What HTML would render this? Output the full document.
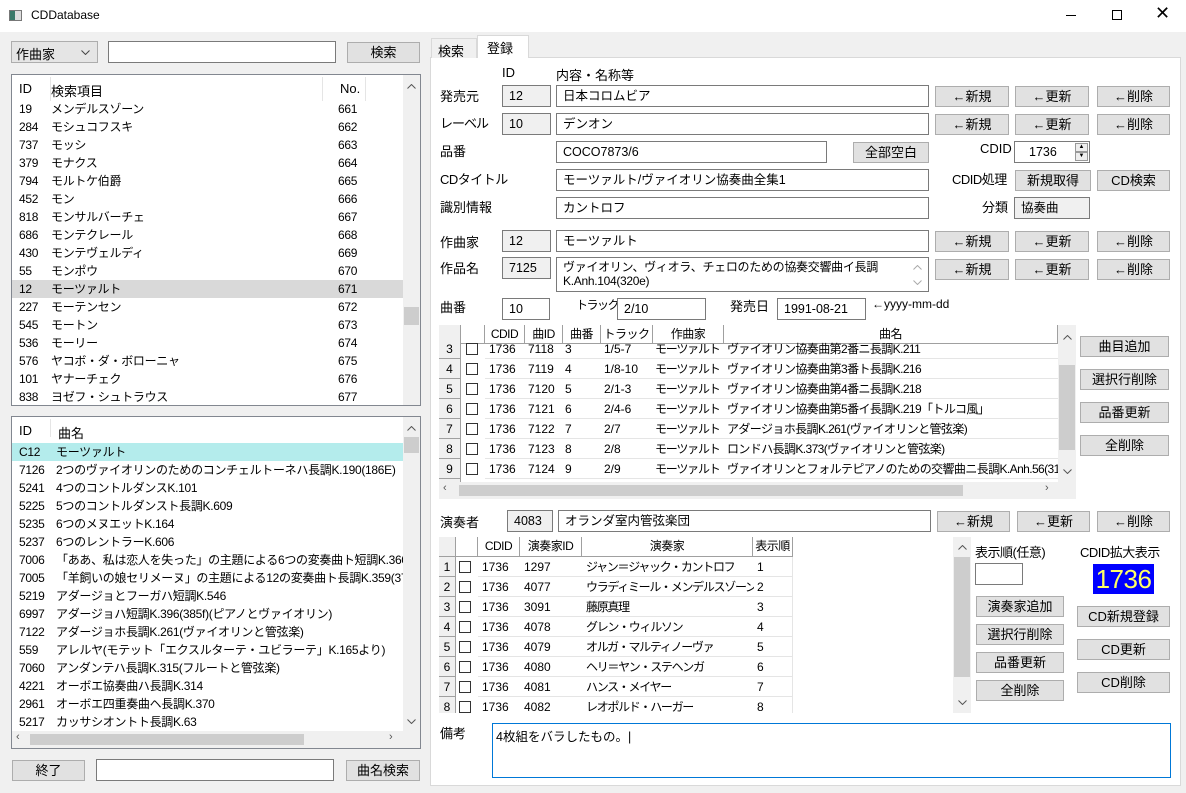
<!DOCTYPE html>
<html><head><meta charset="utf-8"><style>
*{box-sizing:border-box;margin:0;padding:0}
body{width:1186px;height:793px;background:#f0f0f0;font:12px "Liberation Sans","Noto Sans CJK JP",sans-serif;color:#000;position:relative;overflow:hidden}
.a{position:absolute;white-space:nowrap}
.b{position:absolute;background:#e1e1e1;border:1px solid #adadad;text-align:center;font-size:13px;white-space:nowrap}
.t{position:absolute;background:#fff;border:1px solid #7a7a7a;padding-left:6px;font-size:12.5px;white-space:nowrap;overflow:hidden}
.r{position:absolute;background:#f0f0f0;border:1px solid #7a7a7a;padding-left:6px;font-size:12.5px;white-space:nowrap}
.l{position:absolute;font-size:13px;white-space:nowrap}
.box{position:absolute;background:#fff;border:1px solid #828790;overflow:hidden}
.row{position:absolute;left:0;height:18px;line-height:18px;white-space:nowrap;letter-spacing:-0.3px}
.vs{position:absolute;background:#f0f0f0}
.th{position:absolute;height:18px;line-height:18px;text-align:center;border-right:1px solid #a0a0a0;border-bottom:1px solid #a0a0a0;background:#fff;overflow:hidden;letter-spacing:-0.5px}
.gr{position:absolute;height:20px;line-height:20px;border-bottom:1px solid #e5e5e5;white-space:nowrap;font-size:12px}
.rn{position:absolute;background:#f0f0f0;border-right:1px solid #a0a0a0;border-bottom:1px solid #a0a0a0;text-align:center}
.cb{position:absolute;width:12px;height:12px;border:1px solid #333;background:#fff}
</style></head><body>
<div class="a" style="left:0;top:0;width:1186px;height:32px;background:#fff"></div>
<div class="a" style="left:9px;top:10px;width:13px;height:11px;border:1px solid #777;background:#ddd"><div style="width:5px;height:9px;background:#3b7a6a"></div></div>
<div class="a" style="left:31px;top:8px;font-size:12px">CDDatabase</div>
<div class="a" style="left:1066px;top:15px;width:10px;height:1px;background:#000"></div>
<div class="a" style="left:1112px;top:10px;width:10px;height:10px;border:1px solid #000"></div>
<div class="a" style="left:1155px;top:3px;font-size:18px">✕</div>

<div class="a" style="left:11px;top:41px;width:87px;height:22px;background:#e5e5e5;border:1px solid #adadad;padding:2px 4px;font-size:13px">作曲家<svg style="position:absolute;right:7px;top:8px" width="9" height="5"><path d="M0.5 0.5L4.5 4.5L8.5 0.5" fill="none" stroke="#444"/></svg></div>
<div class="t" style="left:108px;top:41px;width:228px;height:22px"></div>
<div class="b" style="left:347px;top:42px;width:73px;height:21px;line-height:19px">検索</div>

<div class="box" style="left:11px;top:74px;width:410px;height:332px">
 <div class="a" style="left:38px;top:2px;width:1px;height:24px;background:#e5e5e5"></div>
 <div class="a" style="left:310px;top:2px;width:1px;height:24px;background:#e5e5e5"></div>
 <div class="a" style="left:353px;top:2px;width:1px;height:24px;background:#e5e5e5"></div>
 <div class="a" style="left:7px;top:6px;font-size:13px">ID</div><div class="a" style="left:39px;top:6px;font-size:13px">検索項目</div><div class="a" style="left:328px;top:6px;font-size:13px">No.</div>
 <div id="l1"></div>
 <div class="vs" style="left:391px;top:0;width:17px;height:330px"></div>
 <svg class="a" style="left:395px;top:9px" width="9" height="5"><path d="M0.5 4.5L4.5 0.5L8.5 4.5" fill="none" stroke="#555"/></svg>
 <div class="a" style="left:392px;top:232px;width:15px;height:18px;background:#cdcdcd"></div>
</div>

<div class="box" style="left:11px;top:416px;width:410px;height:333px">
 <div class="a" style="left:38px;top:2px;width:1px;height:18px;background:#e5e5e5"></div>
 <div class="a" style="left:7px;top:6px;font-size:13px">ID</div><div class="a" style="left:46px;top:6px;font-size:13px">曲名</div>
 <div id="l2"></div>
 <div class="vs" style="left:391px;top:0;width:17px;height:314px"></div>
 <svg class="a" style="left:395px;top:9px" width="9" height="5"><path d="M0.5 4.5L4.5 0.5L8.5 4.5" fill="none" stroke="#555"/></svg>
 <div class="a" style="left:392px;top:20px;width:15px;height:16px;background:#cdcdcd"></div>
 <svg class="a" style="left:395px;top:302px" width="9" height="5"><path d="M0.5 0.5L4.5 4.5L8.5 0.5" fill="none" stroke="#555"/></svg>
 <div class="vs" style="left:0;top:314px;width:408px;height:17px"></div>
 <div class="a" style="left:18px;top:317px;width:274px;height:11px;background:#cdcdcd"></div>
 <div class="a" style="left:4px;top:314px;font-size:11px;color:#555">‹</div>
 <div class="a" style="left:377px;top:314px;font-size:11px;color:#555">›</div>
</div>

<div class="b" style="left:12px;top:760px;width:73px;height:21px;line-height:19px">終了</div>
<div class="t" style="left:96px;top:759px;width:238px;height:22px"></div>
<div class="b" style="left:346px;top:760px;width:74px;height:21px;line-height:19px">曲名検索</div>

<div class="a" style="left:430px;top:57px;width:751px;height:729px;background:#fff;border:1px solid #d9d9d9"></div>
<div class="a" style="left:431px;top:38px;width:46px;height:20px;border:1px solid #d9d9d9;border-bottom:none;background:#f0f0f0;padding:2px 6px;font-size:13px">検索</div>
<div class="a" style="left:477px;top:35px;width:52px;height:23px;border:1px solid #d9d9d9;border-bottom:none;background:#fff;padding:2px 9px;font-size:13px">登録</div>

<div class="l" style="left:502px;top:65px">ID</div><div class="l" style="left:556px;top:65px">内容・名称等</div>
<div class="l" style="left:440px;top:86px">発売元</div><div class="r" style="left:502px;top:85px;width:49px;height:22px;line-height:20px">12</div><div class="t" style="left:556px;top:85px;width:373px;height:22px;line-height:20px">日本コロムビア</div>
<div class="l" style="left:440px;top:113px;letter-spacing:-1px">レーベル</div><div class="r" style="left:502px;top:113px;width:49px;height:22px;line-height:20px">10</div><div class="t" style="left:556px;top:113px;width:373px;height:22px;line-height:20px">デンオン</div>
<div class="l" style="left:440px;top:141px">品番</div><div class="t" style="left:556px;top:141px;width:271px;height:22px;line-height:20px">COCO7873/6</div>
<div class="b" style="left:853px;top:142px;width:76px;height:21px;line-height:19px">全部空白</div>
<div class="l" style="left:980px;top:141px">CDID</div>
<div class="t" style="left:1014px;top:141px;width:76px;height:22px;line-height:20px;padding-left:14px">1736</div>
<div class="a" style="left:1075px;top:143px;width:13px;height:9px;border:1px solid #999;background:#eee;font-size:6px;text-align:center;line-height:7px">▲</div>
<div class="a" style="left:1075px;top:152px;width:13px;height:9px;border:1px solid #999;background:#eee;font-size:6px;text-align:center;line-height:7px">▼</div>
<div class="l" style="left:440px;top:169px;letter-spacing:-0.5px">CDタイトル</div><div class="t" style="left:556px;top:169px;width:373px;height:22px;line-height:20px">モーツァルト/ヴァイオリン協奏曲全集1</div>
<div class="l" style="left:952px;top:169px;letter-spacing:-0.5px">CDID処理</div>
<div class="b" style="left:1015px;top:170px;width:76px;height:21px;line-height:19px">新規取得</div>
<div class="b" style="left:1097px;top:170px;width:73px;height:21px;line-height:19px">CD検索</div>
<div class="l" style="left:440px;top:197px">識別情報</div><div class="t" style="left:556px;top:197px;width:373px;height:22px;line-height:20px">カントロフ</div>
<div class="l" style="left:982px;top:197px">分類</div><div class="r" style="left:1014px;top:197px;width:76px;height:22px;line-height:20px">協奏曲</div>

<div class="l" style="left:440px;top:232px">作曲家</div><div class="r" style="left:502px;top:230px;width:49px;height:22px;line-height:20px">12</div><div class="t" style="left:556px;top:230px;width:373px;height:22px;line-height:20px">モーツァルト</div>
<div class="l" style="left:440px;top:258px">作品名</div><div class="r" style="left:502px;top:257px;width:49px;height:22px;line-height:20px">7125</div>
<div class="t" style="left:556px;top:257px;width:373px;height:35px;line-height:14px;padding-top:2px;font-size:12px;letter-spacing:-0.3px">ヴァイオリン、ヴィオラ、チェロのための協奏交響曲イ長調<br>K.Anh.104(320e)<svg style="position:absolute;right:6px;top:7px" width="9" height="5"><path d="M0.5 4.5L4.5 0.5L8.5 4.5" fill="none" stroke="#aaa"/></svg><svg style="position:absolute;right:6px;top:22px" width="9" height="5"><path d="M0.5 0.5L4.5 4.5L8.5 0.5" fill="none" stroke="#aaa"/></svg></div>
<div class="l" style="left:440px;top:297px">曲番</div><div class="t" style="left:502px;top:298px;width:48px;height:22px;line-height:20px">10</div>
<div class="l" style="left:576px;top:296px;font-size:12px;letter-spacing:-1.5px">トラック</div><div class="t" style="left:617px;top:298px;width:89px;height:22px;line-height:20px">2/10</div>
<div class="l" style="left:730px;top:296px">発売日</div><div class="t" style="left:777px;top:298px;width:89px;height:22px;line-height:20px">1991-08-21</div>
<div class="l" style="left:872px;top:297px;font-size:12px">←yyyy-mm-dd</div>

<div id="btns"></div>

<div class="a" style="left:439px;top:325px;width:637px;height:174px;background:#fff;overflow:hidden">
 <div class="rn" style="left:0;top:0;width:22px;height:19px"></div>
 <div id="g1h"></div>
 <div id="g1"></div>
 <div class="vs" style="left:619px;top:0;width:18px;height:157px"></div>
 <svg class="a" style="left:624px;top:10px" width="9" height="5"><path d="M0.5 4.5L4.5 0.5L8.5 4.5" fill="none" stroke="#555"/></svg>
 <div class="a" style="left:620px;top:40px;width:16px;height:85px;background:#cdcdcd"></div>
 <svg class="a" style="left:624px;top:144px" width="9" height="5"><path d="M0.5 0.5L4.5 4.5L8.5 0.5" fill="none" stroke="#555"/></svg>
 <div class="vs" style="left:0;top:157px;width:637px;height:17px"></div>
 <div class="a" style="left:20px;top:160px;width:504px;height:11px;background:#cdcdcd"></div>
 <div class="a" style="left:4px;top:157px;font-size:11px;color:#555">‹</div>
 <div class="a" style="left:606px;top:157px;font-size:11px;color:#555">›</div>
</div>
<div class="b" style="left:1080px;top:336px;width:89px;height:21px;line-height:19px">曲目追加</div>
<div class="b" style="left:1080px;top:369px;width:89px;height:21px;line-height:19px">選択行削除</div>
<div class="b" style="left:1080px;top:402px;width:89px;height:21px;line-height:19px">品番更新</div>
<div class="b" style="left:1080px;top:435px;width:89px;height:21px;line-height:19px">全削除</div>

<div class="l" style="left:440px;top:512px">演奏者</div><div class="r" style="left:507px;top:510px;width:46px;height:22px;line-height:20px">4083</div>
<div class="t" style="left:558px;top:510px;width:373px;height:22px;line-height:20px">オランダ室内管弦楽団</div>

<div class="a" style="left:439px;top:537px;width:532px;height:176px;background:#fff;overflow:hidden">
 <div class="rn" style="left:0;top:0;width:17px;height:20px"></div>
 <div id="g2h"></div>
 <div id="g2"></div>
 <div class="vs" style="left:514px;top:0;width:18px;height:176px"></div>
 <svg class="a" style="left:519px;top:8px" width="9" height="5"><path d="M0.5 4.5L4.5 0.5L8.5 4.5" fill="none" stroke="#555"/></svg>
 <div class="a" style="left:515px;top:20px;width:16px;height:120px;background:#cdcdcd"></div>
 <svg class="a" style="left:519px;top:163px" width="9" height="5"><path d="M0.5 0.5L4.5 4.5L8.5 0.5" fill="none" stroke="#555"/></svg>
</div>
<div class="l" style="left:975px;top:542px;letter-spacing:-0.5px">表示順(任意)</div>
<div class="t" style="left:975px;top:563px;width:48px;height:22px"></div>
<div class="b" style="left:976px;top:596px;width:88px;height:21px;line-height:19px">演奏家追加</div>
<div class="b" style="left:976px;top:624px;width:88px;height:21px;line-height:19px">選択行削除</div>
<div class="b" style="left:976px;top:652px;width:88px;height:21px;line-height:19px">品番更新</div>
<div class="b" style="left:976px;top:680px;width:88px;height:21px;line-height:19px">全削除</div>
<div class="l" style="left:1080px;top:542px;letter-spacing:-0.5px">CDID拡大表示</div>
<div class="a" style="left:1093px;top:564px;width:61px;height:30px;background:#0000ff;color:#ffff66;font-size:26px;line-height:30px;text-align:center;font-family:'Liberation Sans',sans-serif;letter-spacing:-0.5px">1736</div>
<div class="b" style="left:1077px;top:606px;width:93px;height:21px;line-height:19px">CD新規登録</div>
<div class="b" style="left:1077px;top:639px;width:93px;height:21px;line-height:19px">CD更新</div>
<div class="b" style="left:1077px;top:672px;width:93px;height:21px;line-height:19px">CD削除</div>

<div class="l" style="left:440px;top:723px">備考</div>
<div class="a" style="left:492px;top:723px;width:679px;height:55px;background:#fff;border:1px solid #0078d7;padding:2px 3px;font-size:12.5px">4枚組をバラしたもの。|</div>

<script>
function h(id,s){document.getElementById(id).innerHTML=s}
var L1=[["19","メンデルスゾーン",661],["284","モシュコフスキ",662],["737","モッシ",663],["379","モナクス",664],["794","モルトケ伯爵",665],["452","モン",666],["818","モンサルバーチェ",667],["686","モンテクレール",668],["430","モンテヴェルディ",669],["55","モンポウ",670],["12","モーツァルト",671],["227","モーテンセン",672],["545","モートン",673],["536","モーリー",674],["576","ヤコボ・ダ・ボローニャ",675],["101","ヤナーチェク",676],["838","ヨゼフ・シュトラウス",677]];
var s="";L1.forEach(function(r,i){var y=25+i*18;s+='<div class="row" style="top:'+y+'px;width:391px;'+(i==10?'background:#d9d9d9':'')+'"><span class="a" style="left:7px">'+r[0]+'</span><span class="a" style="left:39px">'+r[1]+'</span><span class="a" style="left:326px">'+r[2]+'</span></div>'});h("l1",s);
var L2=[["C12","モーツァルト"],["7126","2つのヴァイオリンのためのコンチェルトーネハ長調K.190(186E)"],["5241","4つのコントルダンスK.101"],["5225","5つのコントルダンスト長調K.609"],["5235","6つのメヌエットK.164"],["5237","6つのレントラーK.606"],["7006","「ああ、私は恋人を失った」の主題による6つの変奏曲ト短調K.360"],["7005","「羊飼いの娘セリメーヌ」の主題による12の変奏曲ト長調K.359(374a)"],["5219","アダージョとフーガハ短調K.546"],["6997","アダージョハ短調K.396(385f)(ピアノとヴァイオリン)"],["7122","アダージョホ長調K.261(ヴァイオリンと管弦楽)"],["559","アレルヤ(モテット「エクスルターテ・ユビラーテ」K.165より)"],["7060","アンダンテハ長調K.315(フルートと管弦楽)"],["4221","オーボエ協奏曲ハ長調K.314"],["2961","オーボエ四重奏曲ヘ長調K.370"],["5217","カッサシオントト長調K.63"]];
s="";L2.forEach(function(r,i){var y=26+i*18;s+='<div class="row" style="top:'+y+'px;width:391px;'+(i==0?'background:#b4ecec':'')+'"><span class="a" style="left:7px">'+r[0]+'</span><span class="a" style="left:44px">'+r[1]+'</span></div>'});h("l2",s);
var B=[[85,935,1015,1097],[113,935,1015,1097],[230,935,1015,1097],[258,935,1015,1097],[510,937,1017,1097]];
s="";B.forEach(function(r){var w=r[0]==510?[73,73,73]:[74,74,73];s+='<div class="b" style="left:'+r[1]+'px;top:'+(r[0]+1)+'px;width:'+w[0]+'px;height:21px;line-height:19px">←新規</div><div class="b" style="left:'+r[2]+'px;top:'+(r[0]+1)+'px;width:'+w[1]+'px;height:21px;line-height:19px">←更新</div><div class="b" style="left:'+r[3]+'px;top:'+(r[0]+1)+'px;width:'+w[2]+'px;height:21px;line-height:19px">←削除</div>'});h("btns",s);
var C1=[[22,24,""],[46,40,"CDID"],[86,38,"曲ID"],[124,38,"曲番"],[162,52,"トラック"],[214,71,"作曲家"],[285,334,"曲名"]];
s="";C1.forEach(function(c){s+='<div class="th" style="left:'+c[0]+'px;top:0;width:'+c[1]+'px;height:19px">'+c[2]+'</div>'});h("g1h",s);
var G1=[["3","7118","3","1/5-7","ヴァイオリン協奏曲第2番ニ長調K.211"],["4","7119","4","1/8-10","ヴァイオリン協奏曲第3番ト長調K.216"],["5","7120","5","2/1-3","ヴァイオリン協奏曲第4番ニ長調K.218"],["6","7121","6","2/4-6","ヴァイオリン協奏曲第5番イ長調K.219「トルコ風」"],["7","7122","7","2/7","アダージョホ長調K.261(ヴァイオリンと管弦楽)"],["8","7123","8","2/8","ロンドハ長調K.373(ヴァイオリンと管弦楽)"],["9","7124","9","2/9","ヴァイオリンとフォルテピアノのための交響曲ニ長調K.Anh.56(315f)"],["10","7125","10","2/10",""]];
s="";G1.forEach(function(r,i){var y=14+i*20;s+='<div class="rn" style="left:0;top:'+y+'px;width:22px;height:20px;line-height:20px">'+r[0]+'</div><div class="cb" style="left:27px;top:'+(y+4)+'px"></div><div class="gr" style="left:46px;top:'+y+'px;width:573px"><span class="a" style="left:4px">1736</span><span class="a" style="left:43px">'+r[1]+'</span><span class="a" style="left:80px">'+r[2]+'</span><span class="a" style="left:119px">'+r[3]+'</span><span class="a" style="left:170px;width:68px;overflow:hidden;letter-spacing:-1.2px">モーツァルト</span><span class="a" style="left:242px;width:331px;overflow:hidden;letter-spacing:-0.6px">'+r[4]+'</span></div>'});h("g1",s);
var C2=[[17,22,""],[39,42,"CDID"],[81,62,"演奏家ID"],[143,171,"演奏家"],[314,40,"表示順"]];
s="";C2.forEach(function(c){s+='<div class="th" style="left:'+c[0]+'px;top:0;width:'+c[1]+'px;height:20px">'+c[2]+'</div>'});h("g2h",s);
var G2=[["1297","ジャン＝ジャック・カントロフ"],["4077","ウラディミール・メンデルスゾーン"],["3091","藤原真理"],["4078","グレン・ウィルソン"],["4079","オルガ・マルティノーヴァ"],["4080","ヘリ＝ヤン・ステヘンガ"],["4081","ハンス・メイヤー"],["4082","レオポルド・ハーガー"]];
s="";G2.forEach(function(r,i){var y=20+i*20;s+='<div class="rn" style="left:0;top:'+y+'px;width:17px;height:20px;line-height:20px">'+(i+1)+'</div><div class="cb" style="left:20px;top:'+(y+4)+'px"></div><div class="gr" style="left:39px;top:'+y+'px;width:315px;border-right:1px solid #e5e5e5"><span class="a" style="left:4px">1736</span><span class="a" style="left:46px">'+r[0]+'</span><span class="a" style="left:108px;width:168px;overflow:hidden;letter-spacing:-1.3px">'+r[1]+'</span><span class="a" style="left:279px">'+(i+1)+'</span></div>'});h("g2",s);
</script>
</body></html>
